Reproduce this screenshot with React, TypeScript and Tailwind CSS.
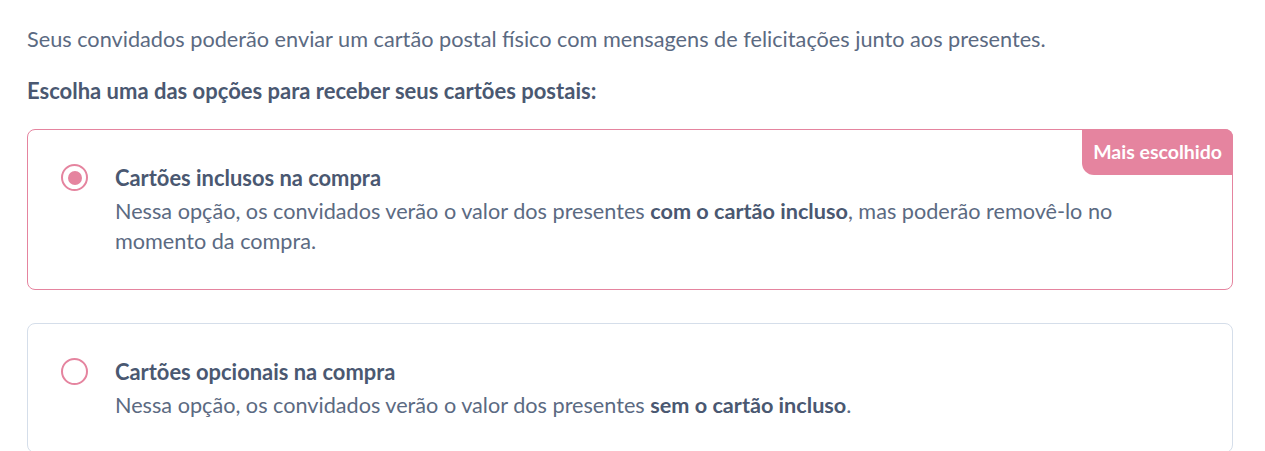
export default function App() {
  return (
    <div className="min-h-screen bg-white px-[27px] pt-[22px] font-['Lato','Noto_Sans',sans-serif] text-[#5b6a82]">
      <p className="text-[21.7px] leading-[34px]">
        Seus convidados poderão enviar um cartão postal físico com mensagens de felicitações junto aos presentes.
      </p>
      <h2 className="mt-[18px] text-[22px] font-bold leading-[34px] text-[#4a5871]">
        Escolha uma das opções para receber seus cartões postais:
      </h2>

      <div className="relative mt-[21px] flex w-[1206px] rounded-lg border border-[#e5849f] px-[33px] py-[33px]">
        <span className="absolute -top-px -right-px rounded-tr-lg rounded-bl-xl bg-[#e5849f] px-[11px] py-[9px] text-[19.5px] font-bold leading-[28px] text-white">
          Mais escolhido
        </span>
        <div className="mt-[1px] flex h-[27px] w-[27px] shrink-0 items-center justify-center rounded-full border-2 border-[#e5849f]">
          <div className="h-[14px] w-[14px] rounded-full bg-[#e5849f]" />
        </div>
        <div className="ml-[27px]">
          <div className="text-[21.9px] font-bold leading-[30px] text-[#4a5871]">Cartões inclusos na compra</div>
          <p className="mt-[3px] max-w-[1010px] text-[21.65px] leading-[30px]">
            Nessa opção, os convidados verão o valor dos presentes{' '}
            <span className="font-bold text-[#4a5871]">com o cartão incluso</span>, mas poderão removê-lo no momento da compra.
          </p>
        </div>
      </div>

      <div className="mt-[33px] flex w-[1206px] rounded-lg border border-[#d5deea] px-[33px] pt-[33px] pb-[32px]">
        <div className="mt-[1px] h-[27px] w-[27px] shrink-0 rounded-full border-2 border-[#e5849f]" />
        <div className="ml-[27px]">
          <div className="text-[21.9px] font-bold leading-[30px] text-[#4a5871]">Cartões opcionais na compra</div>
          <p className="mt-[3px] text-[21.65px] leading-[30px]">
            Nessa opção, os convidados verão o valor dos presentes{' '}
            <span className="font-bold text-[#4a5871]">sem o cartão incluso</span>.
          </p>
        </div>
      </div>
    </div>
  )
}
